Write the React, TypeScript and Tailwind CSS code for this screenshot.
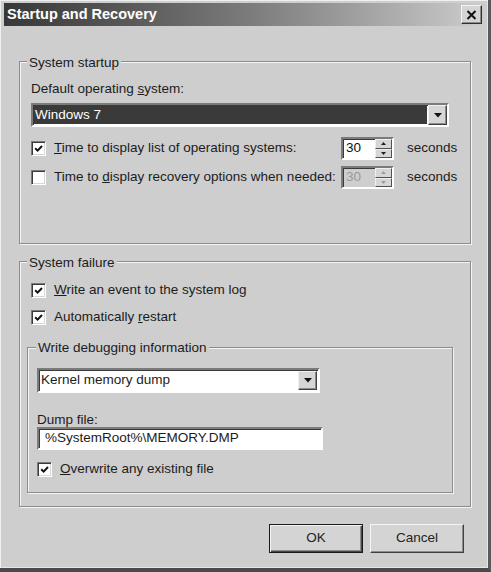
import React from 'react';

const BG = 'bg-[#cecece]';

function Check({ checked }: { checked: boolean }) {
  return (
    <span className="flex h-[15px] w-[15px] shrink-0 items-center justify-center border border-t-[#7b7b7b] border-l-[#7b7b7b] border-b-white border-r-white bg-white shadow-[inset_1px_1px_0_#3a3a3a,inset_-1px_-1px_0_#d6d6d6]">
      {checked && (
        <svg width="9" height="9" viewBox="0 0 9 9">
          <path d="M1.2 4.2 L3.6 6.6 L8 2" stroke="#111" strokeWidth="2" fill="none" />
        </svg>
      )}
    </span>
  );
}

function CheckRow({ checked, children, className = '' }: { checked: boolean; children: React.ReactNode; className?: string }) {
  return (
    <div className={`flex h-[23px] items-center gap-[8px] ${className}`}>
      <Check checked={checked} />
      <span className="whitespace-nowrap">{children}</span>
    </div>
  );
}

function ArrowDown({ color = '#111' }: { color?: string }) {
  return (
    <svg width="8" height="5" viewBox="0 0 8 5">
      <polygon points="0,0 8,0 4,4.5" fill={color} />
    </svg>
  );
}

function DropButton() {
  return (
    <div className="flex h-full w-[19px] items-center justify-center border border-t-[#f0f0f0] border-l-[#f0f0f0] border-r-[#404040] border-b-[#404040] bg-[#d6d6d6] shadow-[inset_-1px_-1px_0_#8c8c8c]">
      <ArrowDown />
    </div>
  );
}

function Spin({ disabled }: { disabled?: boolean }) {
  const arrow = disabled ? '#9c9c9c' : '#222';
  return (
    <div
      className={`flex h-[23px] w-[53px] border-2 border-t-[#7b7b7b] border-l-[#7b7b7b] border-b-white border-r-white shadow-[inset_1px_1px_0_#3a3a3a] ${
        disabled ? 'bg-[#cecece] text-[#9a9a9a]' : 'bg-white text-[#111]'
      }`}
    >
      <span className="flex flex-1 items-center pl-[3px]">30</span>
      <div className="flex w-[17px] flex-col">
        <div className="flex flex-1 items-center justify-center border border-t-[#f0f0f0] border-l-[#f0f0f0] border-r-[#505050] border-b-[#505050] bg-[#d6d6d6]">
          <svg width="5" height="3" viewBox="0 0 5 3">
            <polygon points="0,3 5,3 2.5,0" fill={arrow} />
          </svg>
        </div>
        <div className="flex flex-1 items-center justify-center border border-t-[#f0f0f0] border-l-[#f0f0f0] border-r-[#505050] border-b-[#505050] bg-[#d6d6d6]">
          <svg width="5" height="3" viewBox="0 0 5 3">
            <polygon points="0,0 5,0 2.5,3" fill={arrow} />
          </svg>
        </div>
      </div>
    </div>
  );
}

function Group({
  title,
  className = '',
  legendTop = '-top-[7px]',
  legendLeft = 'left-[7px]',
  children,
}: {
  title: string;
  className?: string;
  legendTop?: string;
  legendLeft?: string;
  children: React.ReactNode;
}) {
  return (
    <div className={`relative border border-[#8c8c8c] shadow-[inset_1px_1px_0_#f4f4f4,1px_1px_0_#f4f4f4] ${className}`}>
      <span className={`absolute ${legendTop} ${legendLeft} ${BG} px-[2px] leading-[16px] whitespace-nowrap`}>{title}</span>
      {children}
    </div>
  );
}

function Button({ label, isDefault }: { label: string; isDefault?: boolean }) {
  return (
    <button
      className={`flex h-[29px] w-[94px] items-center justify-center bg-[#d4d4d4] text-[#222] ${
        isDefault
          ? 'border border-[#1a1a1a] shadow-[inset_1px_1px_0_#f2f2f2,inset_-1px_-1px_0_#454545,inset_-2px_-2px_0_#8c8c8c]'
          : 'border border-t-[#f4f4f4] border-l-[#f4f4f4] border-r-[#404040] border-b-[#404040] shadow-[inset_-1px_-1px_0_#8c8c8c]'
      }`}
    >
      {label}
    </button>
  );
}

export default function App() {
  return (
    <div
      className={`relative h-[572px] w-[491px] overflow-hidden ${BG} border-r-[3px] border-b-[4px] border-r-[#5a5a5a] border-b-[#4a4a4a] font-['Tahoma','Liberation_Sans',sans-serif] text-[13.5px] text-[#1c1c1c] shadow-[inset_1px_1px_0_#f0f0f0,inset_-1px_-1px_0_#e6e6e6]`}
    >
      {/* Title bar */}
      <div className="ml-[4px] mt-[3px] flex h-[23px] w-[481px] items-center justify-between bg-gradient-to-r from-[#383838] via-[#7a7a7a] to-[#cdcdcd] pl-[3px] pr-[3px]">
        <span className="text-[14.5px] font-bold text-white">Startup and Recovery</span>
        <div className="flex h-[19px] w-[21px] items-center justify-center border border-t-[#f4f4f4] border-l-[#f4f4f4] border-r-[#303030] border-b-[#303030] bg-[#d4d4d4] shadow-[inset_-1px_-1px_0_#8c8c8c]">
          <svg width="11" height="10" viewBox="0 0 11 10">
            <path d="M1.5 1 L9.5 9 M9.5 1 L1.5 9" stroke="#111" strokeWidth="2" />
          </svg>
        </div>
      </div>

      {/* System startup */}
      <Group title="System startup" className="ml-[19px] mt-[35px] h-[183px] w-[452px] pl-[11px] pt-[19px]">
        <div className="leading-[16px]">
          Default operating <span className="underline">s</span>ystem:
        </div>
        <div className="mt-[6px] flex h-[24px] w-[418px] border-2 border-t-[#7b7b7b] border-l-[#7b7b7b] border-b-white border-r-white bg-white shadow-[inset_1px_1px_0_#3a3a3a]">
          <div className="m-[1px] flex flex-1 items-center bg-[#3a3a3a] pl-[1px] text-white">Windows 7</div>
          <DropButton />
        </div>
        <div className="mt-[10px] flex h-[23px] items-center">
          <div className="flex w-[310px] items-center gap-[8px]">
            <Check checked />
            <span className="whitespace-nowrap">
              <span className="underline">T</span>ime to display list of operating systems:
            </span>
          </div>
          <Spin />
          <span className="ml-[13px]">seconds</span>
        </div>
        <div className="mt-[6px] flex h-[23px] items-center">
          <div className="flex w-[310px] items-center gap-[8px]">
            <Check checked={false} />
            <span className="whitespace-nowrap">
              Time to <span className="underline">d</span>isplay recovery options when needed:
            </span>
          </div>
          <Spin disabled />
          <span className="ml-[13px]">seconds</span>
        </div>
      </Group>

      {/* System failure */}
      <Group title="System failure" className="ml-[19px] mt-[17px] h-[246px] w-[452px] pl-[11px] pt-[17px]">
        <CheckRow checked>
          <span className="underline">W</span>rite an event to the system log
        </CheckRow>
        <CheckRow checked className="mt-[4px]">
          Automatically <span className="underline">r</span>estart
        </CheckRow>

        <Group
          title="Write debugging information"
          legendTop="-top-[8px]"
          legendLeft="left-[8px]"
          className="-ml-[4px] mt-[18px] h-[146px] w-[426px] pl-[9px] pt-[20px]"
        >
          <div className="flex h-[25px] w-[283px] border-2 border-t-[#7b7b7b] border-l-[#7b7b7b] border-b-white border-r-white bg-white shadow-[inset_1px_1px_0_#3a3a3a]">
            <div className="flex flex-1 items-center pl-[2px]">Kernel memory dump</div>
            <div className="py-[1px] pr-[1px]">
              <DropButton />
            </div>
          </div>
          <div className="mt-[19px] leading-[15px]">Dump file:</div>
          <div className="flex h-[23px] w-[286px] items-center border-2 border-t-[#7b7b7b] border-l-[#7b7b7b] border-b-white border-r-white bg-white pl-[6px] shadow-[inset_1px_1px_0_#3a3a3a]">
            %SystemRoot%\MEMORY.DMP
          </div>
          <CheckRow checked className="mt-[8px]">
            <span className="underline">O</span>verwrite any existing file
          </CheckRow>
        </Group>
      </Group>

      {/* Buttons */}
      <div className="mr-[24px] mt-[17px] flex justify-end gap-[7px]">
        <Button label="OK" isDefault />
        <Button label="Cancel" />
      </div>
    </div>
  );
}
